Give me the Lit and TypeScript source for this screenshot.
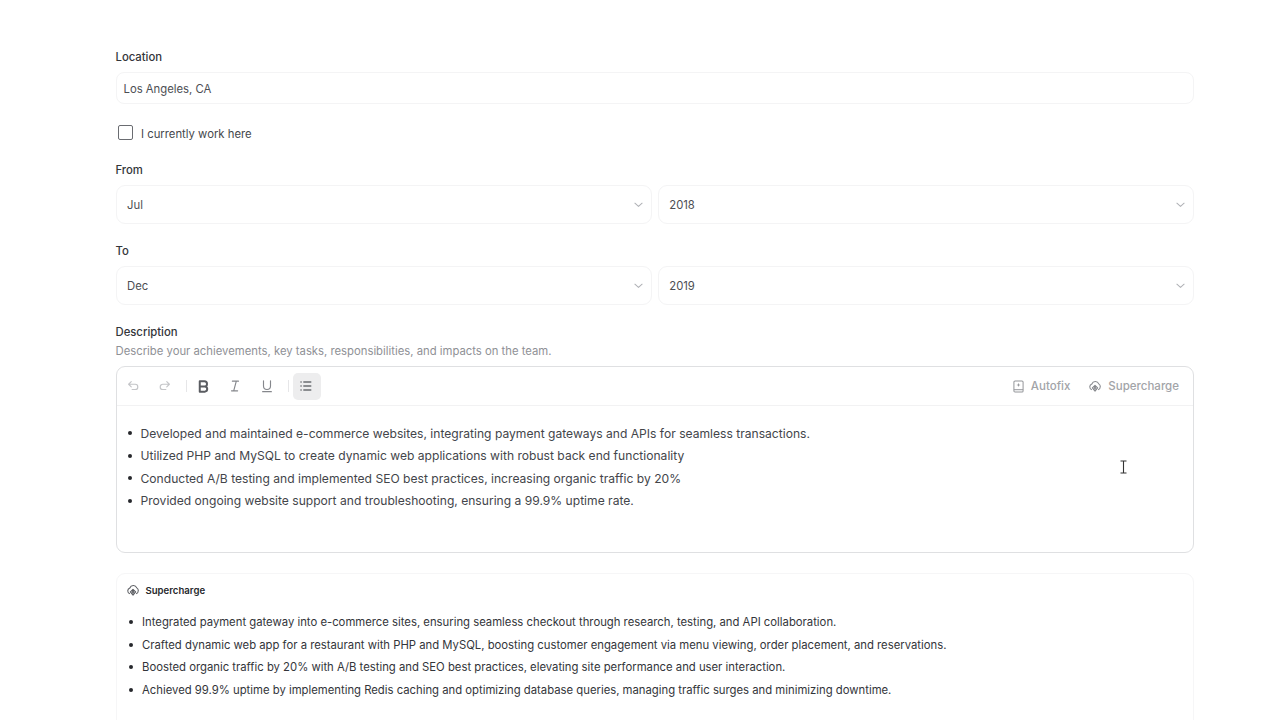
import { LitElement, html, css, svg } from "lit";
import { customElement } from "lit/decorators.js";

const chevron = html`<svg class="chev" viewBox="0 0 10 6" width="9" height="6" fill="none" stroke="#b0b2b6" stroke-width="1.2" stroke-linecap="round" stroke-linejoin="round"><path d="M1 1l4 3.6L9 1"/></svg>`;

const cloud = svg`<path d="M4.4 12.4A3.6 3.6 0 0 1 2 9a3.5 3.5 0 0 1 2.4-3.3A4.2 4.2 0 0 1 12.3 5.6 3.4 3.4 0 0 1 14 9a3.6 3.6 0 0 1-2.4 3.4"/><path d="M8 7.2l3 3-3 3.6-3-3.6z"/><circle cx="8" cy="10.6" r="1"/>`;

@customElement("app-root")
export class AppRoot extends LitElement {
  static styles = css`
    :host { display: block; width: 1280px; height: 720px; overflow: hidden; background: #fff; position: relative; font-family: Inter, "Liberation Sans", sans-serif; color: #3a3c41; font-size: 11.3px; }
    .page { display: flex; flex-direction: column; padding: 50px 86px 0 115.5px; }
    .label { font-weight: 500; color: #33353a; line-height: 14px; font-size: 11.3px; }
    .field { box-sizing: border-box; border: 1px solid #f4f4f5; border-radius: 8px; display: flex; align-items: center; color: #4c4e53; }
    .input { height: 32px; margin-top: 8px; padding: 1px 0 0 7px; }
    .check { display: flex; align-items: center; gap: 8.5px; margin-top: 21px; height: 16px; color: #45474c; }
    .check-text { padding-top: 1px; }
    .box { width: 15px; height: 15px; box-sizing: border-box; border: 1.5px solid #6a6c71; border-radius: 2px; margin: -1px 0 0 2px; }
    .from { margin-top: 22px; }
    .selects { display: grid; grid-template-columns: 1fr 1fr; gap: 6px; margin-top: 8px; }
    .select { height: 39px; padding: 0 8px 0 10.5px; justify-content: space-between; border-radius: 9px; }
    .to { margin-top: 20px; }
    .desc { margin-top: 20px; }
    .help { margin-top: 5px; color: #8f9196; line-height: 15px; }
    .editor { box-sizing: border-box; margin-top: 7px; height: 187px; border: 1px solid #dfe0e2; border-radius: 9px; }
    .toolbar { display: flex; align-items: center; height: 39px; box-sizing: border-box; border-bottom: 1px solid #f2f2f3; padding: 0 14px 0 8.5px; }
    .tool { width: 16px; height: 27px; display: flex; align-items: center; justify-content: center; flex: none; }
    .sep { width: 1px; height: 12px; background: #e6e6e8; flex: none; }
    .on { width: 28px; background: #ededee; border-radius: 5px; }
    .spacer { flex: 1; }
    .action { display: flex; align-items: center; gap: 7px; color: #a2a4a8; font-weight: 500; font-size: 11.5px; }
    .cloud-action { gap: 6px; }
    ul { margin: 0; padding: 0; list-style: none; }
    li { display: flex; align-items: center; height: 22.5px; white-space: nowrap; }
    li::before { content: ""; width: 4px; height: 4px; border-radius: 50%; background: #26282c; flex: none; }
    .editor ul { padding: 16px 0 0 11px; font-size: 12.1px; color: #43454a; }
    .editor li::before { margin-right: 9px; }
    .card { box-sizing: border-box; margin-top: 20px; height: 200px; border: 1px solid #f6f6f7; border-radius: 9px; padding: 8px 9px 0; }
    .title { display: flex; align-items: center; gap: 6px; font-size: 9.6px; font-weight: 600; color: #26282c; height: 16px; }
    .card ul { margin-top: 13px; padding-left: 3px; color: #33353a; }
    .card li::before { margin-right: 9.5px; }
    .cursor { position: absolute; left: 1119px; top: 460px; }
  `;

  private tool(content: unknown, w = 14) {
    return html`<span class="tool"><svg viewBox="0 0 16 16" width=${w} height=${w} fill="none" stroke="currentColor" stroke-width="1.3" stroke-linecap="round" stroke-linejoin="round">${content}</svg></span>`;
  }

  render() {
    const gap = (w: number) => html`<span style="width:${w}px;flex:none"></span>`;
    return html`
      <div class="page">
        <div class="label">Location</div>
        <div class="field input">Los Angeles, CA</div>
        <label class="check"><span class="box"></span><span class="check-text">I currently work here</span></label>
        <div class="label from">From</div>
        <div class="selects">
          <div class="field select"><span>Jul</span>${chevron}</div>
          <div class="field select"><span>2018</span>${chevron}</div>
        </div>
        <div class="label to">To</div>
        <div class="selects">
          <div class="field select"><span>Dec</span>${chevron}</div>
          <div class="field select"><span>2019</span>${chevron}</div>
        </div>
        <div class="label desc">Description</div>
        <div class="help">Describe your achievements, key tasks, responsibilities, and impacts on the team.</div>
        <div class="editor">
          <div class="toolbar">
            <span style="color:#c4c5c8;display:contents">
              ${this.tool(svg`<path d="M3 6h7.5a3 3 0 0 1 0 6H7M3 6l3-3M3 6l3 3"/>`)}
              ${gap(16)}
              ${this.tool(svg`<path d="M13 6H5.5a3 3 0 0 0 0 6H9M13 6l-3-3M13 6l-3 3"/>`)}
            </span>
            ${gap(13)}<span class="sep"></span>${gap(8)}
            <span style="color:#5a5c61;display:contents">
              ${this.tool(svg`<path stroke-width="2.1" d="M4 2.5H9a2.6 2.6 0 0 1 0 5.5H4zM4 8h5.7a2.8 2.8 0 0 1 0 5.5H4z"/>`, 15)}
            </span>
            ${gap(16)}
            <span style="color:#85878c;display:contents">
              ${this.tool(svg`<path d="M5 2.5h7M4 13.5h7M9.5 2.5l-3 11"/>`)}
              ${gap(16)}
              ${this.tool(svg`<path d="M4 2v6a4 4 0 0 0 8 0V2M3 14.5h10"/>`)}
            </span>
            ${gap(13)}<span class="sep"></span>${gap(4)}
            <span class="tool on" style="color:#6b6d72;padding-right:2px;box-sizing:border-box">
              <svg viewBox="0 0 16 16" width="14" height="14" fill="none" stroke="currentColor" stroke-width="1.6" stroke-linecap="round"><path d="M5.5 3.5h8M5.5 8h8M5.5 12.5h8M2.2 3.5h.3M2.2 8h.3M2.2 12.5h.3"/></svg>
            </span>
            <span class="spacer"></span>
            <span class="action">
              <svg viewBox="0 0 12 14" width="11" height="13" fill="none" stroke="#94969a" stroke-width="1.1" stroke-linejoin="round"><rect x="1" y="1" width="10" height="12" rx="1.2"/><path d="M1 10.5h10"/><path d="M6 3l.6 1.7 1.7.6-1.7.6L6 7.6l-.6-1.7-1.7-.6 1.7-.6z" fill="#94969a" stroke="none"/></svg>
              Autofix
            </span>
            ${gap(18)}
            <span class="action cloud-action">
              <svg viewBox="0 0 16 16" width="14" height="14" fill="none" stroke="#85878c" stroke-width="1.2" stroke-linejoin="round">${cloud}</svg>
              Supercharge
            </span>
          </div>
          <ul>
            <li>Developed and maintained e-commerce websites, integrating payment gateways and APIs for seamless transactions.</li>
            <li>Utilized PHP and MySQL to create dynamic web applications with robust back end functionality</li>
            <li>Conducted A/B testing and implemented SEO best practices, increasing organic traffic by 20%</li>
            <li>Provided ongoing website support and troubleshooting, ensuring a 99.9% uptime rate.</li>
          </ul>
        </div>
        <div class="card">
          <div class="title">
            <svg viewBox="0 0 16 16" width="14" height="14" fill="none" stroke="#5a5c61" stroke-width="1.2" stroke-linejoin="round">${cloud}</svg>
            Supercharge
          </div>
          <ul>
            <li>Integrated payment gateway into e-commerce sites, ensuring seamless checkout through research, testing, and API collaboration.</li>
            <li>Crafted dynamic web app for a restaurant with PHP and MySQL, boosting customer engagement via menu viewing, order placement, and reservations.</li>
            <li>Boosted organic traffic by 20% with A/B testing and SEO best practices, elevating site performance and user interaction.</li>
            <li>Achieved 99.9% uptime by implementing Redis caching and optimizing database queries, managing traffic surges and minimizing downtime.</li>
          </ul>
        </div>
      </div>
      <svg class="cursor" width="9" height="14" viewBox="0 0 9 14" fill="none" stroke="#333" stroke-width="1.1"><path d="M1.5 1h6M1.5 13h6M4.5 1v12"/></svg>
    `;
  }
}
